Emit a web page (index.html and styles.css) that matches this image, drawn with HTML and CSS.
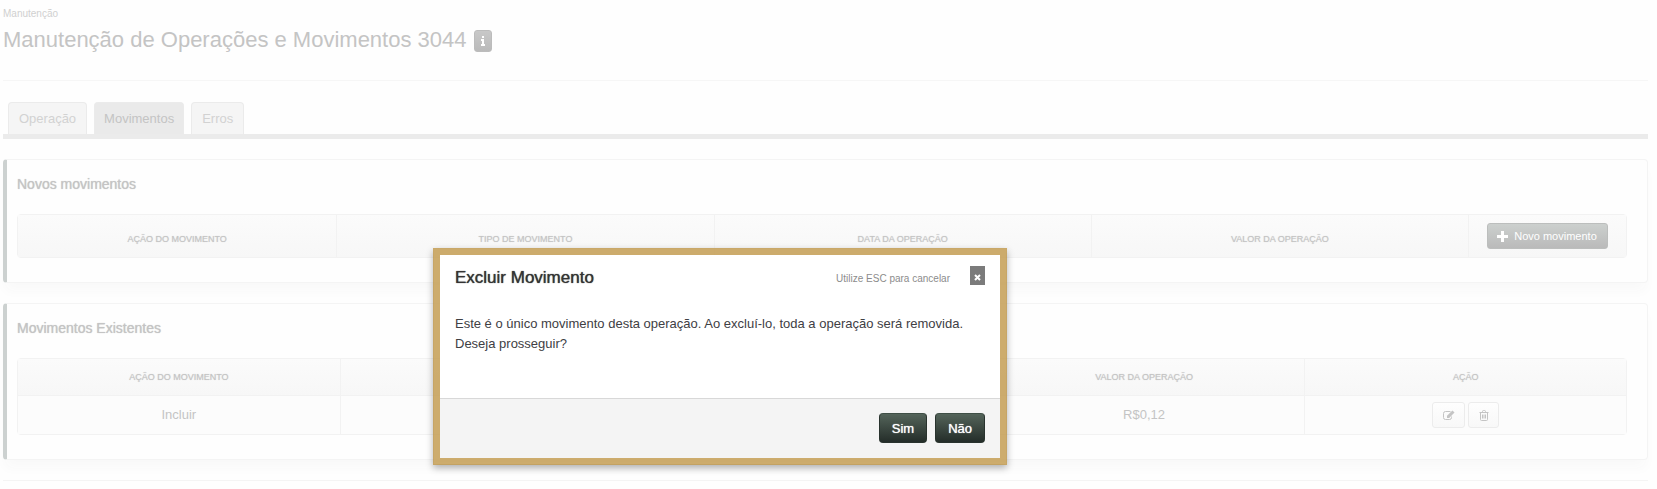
FILE: index.html
```
<!DOCTYPE html>
<html lang="pt-br">
<head>
    <meta charset="UTF-8">
    <meta name="viewport" content="width=device-width, initial-scale=1.0">
    <title>Manutenção de Operações e Movimentos 3044</title>

    <link rel="stylesheet" href="styles.css">
</head>
<body>

    <div class="page">
        <header class="page-header">
            <p class="breadcrumb">Manutenção</p>
            <div class="title-row">
                <h1>Manutenção de Operações e Movimentos 3044</h1>
                <button type="button" class="btn-info" aria-label="Informações">
                    <svg width="6" height="10" viewBox="0 0 6 10"><path d="M2 0h2v2H2zM1 3h3v5h1v2H1V8h1V5H1z"/></svg>
                </button>
            </div>
        </header>

        <nav class="tabs">
            <a href="#operacao">Operação</a>
            <a href="#movimentos" class="active">Movimentos</a>
            <a href="#erros">Erros</a>
        </nav>

        <section class="panel">
            <h2>Novos movimentos</h2>
            <table class="grid new-items">
                <thead>
                    <tr>
                        <th class="col-action">Ação do movimento</th>
                        <th>Tipo de movimento</th>
                        <th>Data da operação</th>
                        <th>Valor da operação</th>
                        <th class="col-button">
                            <button type="button" class="btn-new">
                                <svg width="11" height="11" viewBox="0 0 11 11"><path d="M4 0h3v4h4v3H7v4H4V7H0V4h4z"/></svg>
                                Novo movimento
                            </button>
                        </th>
                    </tr>
                </thead>
            </table>
        </section>

        <section class="panel">
            <h2>Movimentos Existentes</h2>
            <table class="grid">
                <thead>
                    <tr>
                        <th>Ação do movimento</th>
                        <th></th>
                        <th></th>
                        <th>Valor da operação</th>
                        <th>Ação</th>
                    </tr>
                </thead>
                <tbody>
                    <tr>
                        <td>Incluir</td>
                        <td></td>
                        <td></td>
                        <td>R$0,12</td>
                        <td>
                            <div class="actions">
                                <button type="button" class="btn-icon btn-edit" aria-label="Editar">
                                    <svg width="12" height="11" viewBox="0 0 12 11">
                                        <path class="line" d="M7.5 1.5h-5q-2 0-2 2v4q0 2 2 2h4q2 0 2-2V6.500"/>
                                        <path d="M4 8V5.800L9.400.5l2.100 2.100L6.200 8z"/>
                                    </svg>
                                </button>
                                <button type="button" class="btn-icon" aria-label="Excluir">
                                    <svg width="10" height="11" viewBox="0 0 10 11">
                                        <path class="line" d="M.5 2.500h9M3.500 2.500v-1q0-1 1-1h1q1 0 1 1v1M1.500 2.500v7q0 1 1 1h5q1 0 1-1v-7M3.500 4.500v4M5 4.500v4M6.500 4.500v4"/>
                                    </svg>
                                </button>
                            </div>
                        </td>
                    </tr>
                </tbody>
            </table>
        </section>

        <hr>
    </div>

    <div class="modal" role="dialog" aria-labelledby="modal-title">
        <div class="modal-header">
            <h3 id="modal-title">Excluir Movimento</h3>
            <span class="hint">Utilize ESC para cancelar</span>
            <button type="button" class="btn-close" aria-label="Fechar">
                <svg width="7" height="7" viewBox="0 0 7 7"><path d="M1 1l5 5M6 1L1 6"/></svg>
            </button>
        </div>
        <div class="modal-body">
            Este é o único movimento desta operação. Ao excluí-lo, toda a operação será removida.<br>
            Deseja prosseguir?
        </div>
        <div class="modal-footer">
            <button type="button" class="btn-dark">Sim</button>
            <button type="button" class="btn-dark">Não</button>
        </div>
    </div>

</body>
</html>
```

FILE: styles.css
```
* {
    box-sizing: border-box;
}

body {
    margin: 0;
    background: #fefefe;
    color: #c4c4c4;
    font-family: "Liberation Sans", Arial, sans-serif;
    font-size: 13px;
    line-height: 20px;
}

button {
    font-family: inherit;
    padding: 0;
    cursor: pointer;
}

svg {
    display: block;
    fill: currentColor;
}

.page {
    padding: 4px 9px 8px 3px;
}

/* Header */
.page-header {
    height: 77px;
    border-bottom: 1px solid #f6f6f6;
}

.breadcrumb {
    margin: 0;
    font-size: 10px;
    color: #d0d0d0;
}

.title-row {
    display: flex;
    align-items: center;
    gap: 7px;
    height: 34px;
}

h1 {
    margin: 0;
    font-size: 22px;
    font-weight: normal;
    line-height: 30px;
    padding-bottom: 2px;
}

.btn-info {
    display: flex;
    align-items: center;
    justify-content: center;
    width: 18px;
    height: 22px;
    border: 1px solid #bcbcbc;
    border-radius: 3px;
    background: linear-gradient(#c8c8c8, #bababa);
    color: #fff;
}

/* Tabs */
.tabs {
    display: flex;
    gap: 7px;
    margin: 21px 0 20px;
    padding-left: 5px;
    border-bottom: 5px solid #ebebeb;
}

.tabs a {
    padding: 6px 10px 5px;
    border: 1px solid #ebebeb;
    border-bottom: 0;
    border-radius: 4px 4px 0 0;
    background: #f5f5f5;
    color: #d2d2d2;
    text-decoration: none;
}

.tabs .active {
    padding: 6px 9px 5px;
    background: #eaeaea;
    color: #c4c4c4;
}

/* Panels */
.panel {
    margin-bottom: 20px;
    padding: 14px 20px 24px 10px;
    border: 1px solid #f4f4f4;
    border-left: 4px solid #ccd1d0;
    border-radius: 4px;
    background: #fefefe;
    box-shadow: 0 10px 12px -2px #f9f9f9;
}

h2 {
    margin: 0 0 20px;
    font-size: 14px;
    font-weight: normal;
    text-shadow: 0 0 1px #c4c4c4;
}

.grid {
    width: 100%;
    table-layout: fixed;
    border: 1px solid #f2f2f2;
    border-radius: 4px;
    border-spacing: 0;
    text-align: center;
}

.grid th {
    height: 36px;
    padding: 0;
    background: linear-gradient(#fbfbfb, #f7f7f7);
    font-size: 9px;
    font-weight: normal;
    text-transform: uppercase;
    text-shadow: 0 0 1px #d0d0d0;
}

.grid td {
    height: 39px;
    padding: 0;
    border-top: 1px solid #f2f2f2;
    background: #fcfcfc;
}

.grid th + th,
.grid td + td {
    border-left: 1px solid #f2f2f2;
}

.new-items th {
    height: 42px;
    padding-top: 6px;
}

.new-items .col-action {
    width: 19.8%;
}

.new-items .col-button {
    width: 158px;
    padding-top: 0;
}

.btn-new {
    display: inline-flex;
    align-items: center;
    gap: 6px;
    height: 26px;
    padding: 0 10px 0 9px;
    border: 1px solid #bcbebd;
    border-radius: 3px;
    background: linear-gradient(#ccd0ce, #bababa);
    color: #fff;
    font-size: 11px;
}

.actions {
    display: flex;
    justify-content: center;
    gap: 3px;
}

.btn-icon {
    display: flex;
    align-items: center;
    justify-content: center;
    width: 31px;
    height: 26px;
    border: 1px solid #ececec;
    border-radius: 3px;
    background: linear-gradient(#fefefe, #f8f8f8);
    color: #c4c4c4;
}

.btn-edit {
    width: 33px;
}

.line {
    fill: none;
    stroke: currentColor;
}

hr {
    margin: 0;
    border: 0;
    border-top: 1px solid #f4f4f4;
}

/* Confirmation dialog */
.modal {
    position: absolute;
    top: 248px;
    left: 433px;
    width: 574px;
    border: 7px solid rgba(196, 157, 84, 0.85);
    background: #fff;
    background-clip: padding-box;
    box-shadow: 0 3px 7px rgba(0, 0, 0, 0.3);
    color: #404044;
}

.modal-header {
    display: flex;
    align-items: flex-start;
    padding: 11px 15px 0;
}

h3 {
    flex: 1;
    margin: 2px 0 0;
    color: #333;
    font-size: 17px;
    font-weight: normal;
    text-shadow: 0 0 1px #333;
}

.hint {
    margin: 3px 20px 0 0;
    color: #8c8c8c;
    font-size: 10px;
}

.btn-close {
    display: flex;
    align-items: center;
    justify-content: center;
    width: 15px;
    height: 19px;
    padding-top: 4px;
    border: 0;
    background: #7b7b7b;
    color: #fff;
}

.btn-close path {
    stroke: currentColor;
    stroke-width: 2;
}

.modal-body {
    padding: 25px 15px 44px;
}

.modal-footer {
    display: flex;
    justify-content: flex-end;
    gap: 8px;
    padding: 14px 15px 15px;
    border-top: 1px solid #d8d8d8;
    background: #f4f4f4;
}

.btn-dark {
    height: 30px;
    padding: 0 12px;
    border: 1px solid #29332e;
    border-top-color: #3f4f46;
    border-radius: 4px;
    background: linear-gradient(#54645a, #242d29);
    color: #fff;
    font-size: 13px;
    text-shadow: 0 0 1px #fff;
}
```
